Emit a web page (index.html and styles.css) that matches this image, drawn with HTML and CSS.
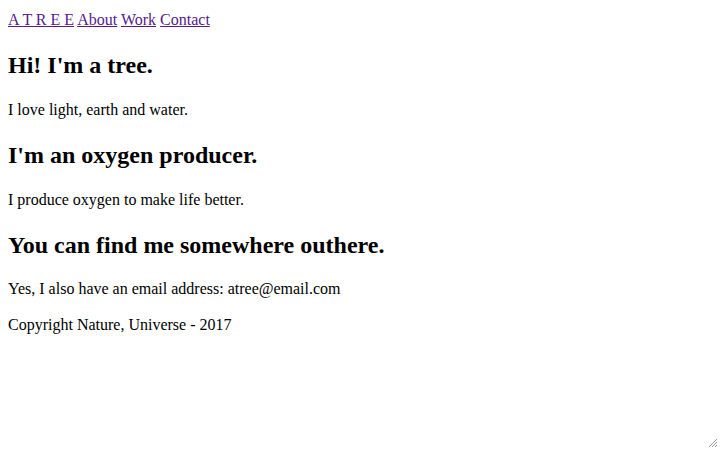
FILE: index.html
```html
<!DOCTYPE html>
<html>
<head>
<meta charset="utf-8">
<title>A Tree</title>
<link rel="stylesheet" href="styles.css">
</head>
<body>
<header class="nav">
<a href="#">A T R E E</a>
<a href="#">About</a>
<a href="#">Work</a>
<a href="#">Contact</a>
</header>
<section>
<h2>Hi! I'm a tree.</h2>
<p>I love light, earth and water.</p>
</section>
<section>
<h2>I'm an oxygen producer.</h2>
<p>I produce oxygen to make life better.</p>
</section>
<section>
<h2>You can find me somewhere outhere.</h2>
<p>Yes, I also have an email address: atree@email.com</p>
</section>
<footer><p>Copyright Nature, Universe - 2017</p></footer>
<svg class="grip" width="12" height="12" viewBox="0 0 12 12"><path d="M11 3 L3 11 M11 6 L6 11 M11 9 L9 11" stroke="#999" stroke-width="1"/></svg>
</body>
</html>
```
FILE: styles.css
```css
body {
  font-family: "Liberation Serif", "Times New Roman", serif;
  font-size: 16px;
  line-height: 1.25;
  color: #000;
  background: #fff;
  padding-top: 1px;
}
.nav { padding-top: 1px; }
a { color: #551a8b; }
.grip {
  position: fixed;
  right: 2px;
  bottom: 2px;
}
```
